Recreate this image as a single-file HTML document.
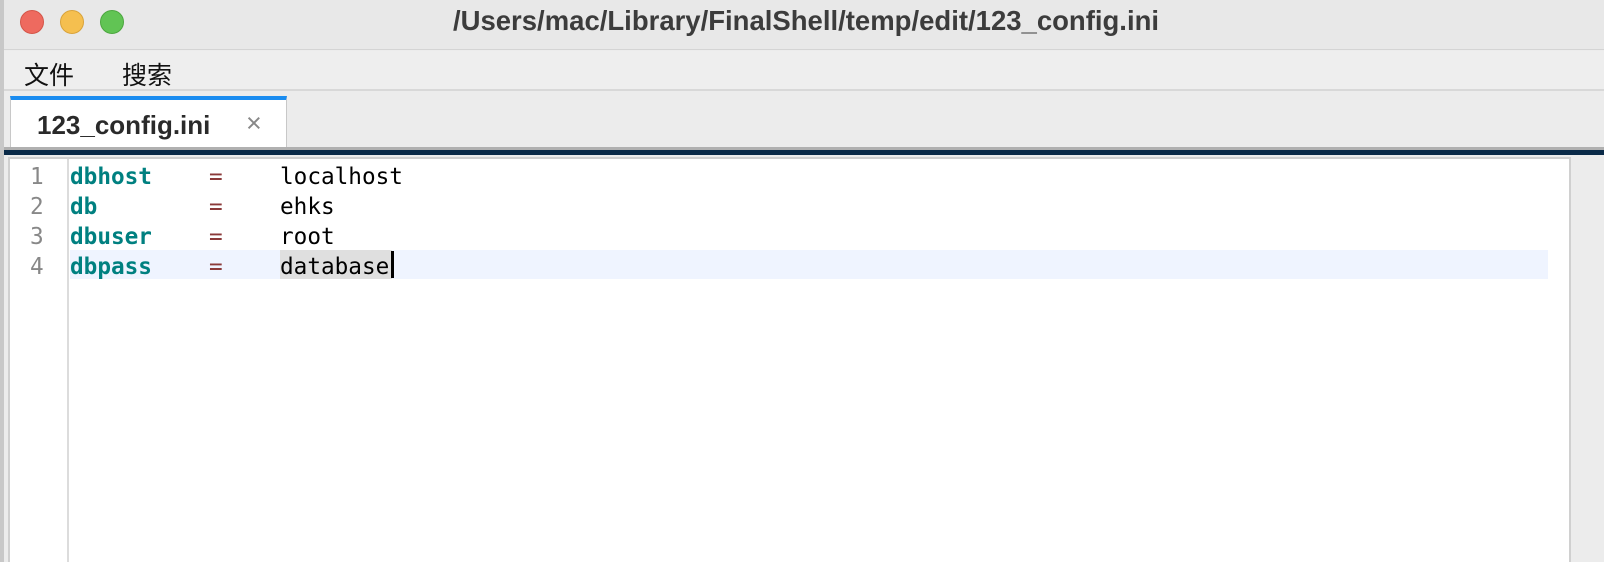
<!DOCTYPE html>
<html><head><meta charset="utf-8"><style>
*{margin:0;padding:0;box-sizing:border-box}
body{width:1604px;height:562px;overflow:hidden;background:#ececec;position:relative;font-family:"Liberation Sans","Noto Sans CJK SC",sans-serif}
.abs{position:absolute}
.mono{font-family:"DejaVu Sans Mono","Liberation Mono",monospace;font-size:22.7px;line-height:30px;white-space:pre}
</style></head><body>
<div class="abs" style="left:0;top:0;width:4px;height:562px;background:#c8c8c8"></div>
<div class="abs" style="left:4px;top:0;width:1600px;height:50px;background:#e8e8e8;border-bottom:1px solid #d4d4d4"></div>
<div class="abs" style="left:20px;top:10px;width:24px;height:24px;border-radius:50%;background:#ee6a5f;border:1px solid #d45548"></div>
<div class="abs" style="left:60px;top:10px;width:24px;height:24px;border-radius:50%;background:#f5bf4f;border:1px solid #d9a33a"></div>
<div class="abs" style="left:100px;top:10px;width:24px;height:24px;border-radius:50%;background:#61c454;border:1px solid #4ca73f"></div>
<div class="abs" style="left:0;top:5px;width:1604px;text-align:center;font-size:27.5px;font-weight:bold;color:#3c3c3c;padding-left:8px">/Users/mac/Library/FinalShell/temp/edit/123_config.ini</div>
<div class="abs" style="left:4px;top:51px;width:1600px;height:40px;background:#eeeeee;border-bottom:2px solid #d8d8d8"></div>
<div class="abs" style="left:24px;top:56px;font-size:25px;color:#111">文件</div>
<div class="abs" style="left:122px;top:56px;font-size:25px;color:#111">搜索</div>
<div class="abs" style="left:10px;top:96px;width:277px;height:52px;background:#fff;border:1px solid #c8c8c8;border-top:4px solid #1a8cf0"></div>
<div class="abs" style="left:37px;top:110px;font-size:26px;font-weight:bold;color:#2a2a2a">123_config.ini</div>
<div class="abs" style="left:246px;top:108px;font-size:27px;color:#888">×</div>
<div class="abs" style="left:4px;top:147px;width:1600px;height:3px;background:#b0b0b0"></div>
<div class="abs" style="left:4px;top:150px;width:1600px;height:5px;background:#0a2a48"></div>
<div class="abs" style="left:8px;top:157px;width:1563px;height:405px;background:#fff;border:2px solid #d0d0d0;border-bottom:none"></div>
<div class="abs" style="left:67px;top:159px;width:2px;height:403px;background:#dcdcdc"></div>
<div class="abs" style="left:70px;top:250px;width:1478px;height:29px;background:#eff4ff"></div>
<div class="abs" style="left:280px;top:250px;width:112px;height:29px;background:#dfdfdf"></div>
<div class="abs" style="left:391px;top:251px;width:3px;height:27px;background:#000"></div>
<div class="abs mono" style="left:30px;top:162px;color:#888">1
2
3
4</div>
<div class="abs mono" style="left:70px;top:162px;color:#008080;font-weight:bold">dbhost
db
dbuser
dbpass</div>
<div class="abs mono" style="left:209px;top:162px;color:#8b3a3a">=
=
=
=</div>
<div class="abs mono" style="left:280px;top:162px;color:#000">localhost
ehks
root
database</div>
</body></html>
